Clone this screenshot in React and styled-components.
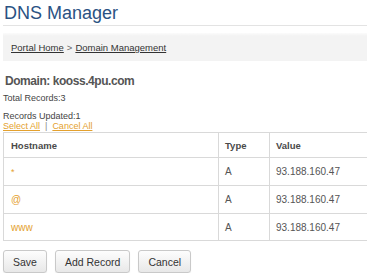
import React from 'react';
import styled, { createGlobalStyle } from 'styled-components';

const GlobalStyle = createGlobalStyle`
    html, body {
        margin: 0;
        padding: 0;
        background: #ffffff;
        overflow: hidden;
    }
    body {
        font-family: "Liberation Sans", Arial, sans-serif;
        color: #333333;
    }
`

const Page = styled.div`
    width: 400px;
    padding: 0 0 0 3px;
    box-sizing: border-box;
`
const Title = styled.h1`
    margin: 0;
    padding: 3px 0 0 1px;
    height: 22px;
    font-size: 18px;
    font-weight: normal;
    color: #2a5283;
    line-height: 20px;
    border-bottom: 1px solid #e3e3e3;
`
const Breadcrumb = styled.div`
    margin-top: 7px;
    height: 28px;
    display: flex;
    align-items: center;
    padding: 1px 0 0 8px;
    box-sizing: border-box;
    background: linear-gradient(#fbfbfb 0px, #f3f3f3 3px, #f3f3f3 100%);
    font-size: 9.5px;
    color: #333333;
`
const CrumbLink = styled.a`
    color: #333333;
    text-decoration: underline;
`
const Sep = styled.span`
    color: #666666;
    margin: 0 3px;
`
const Domain = styled.h2`
    margin: 13px 0 0 2px;
    font-size: 12px;
    letter-spacing: -0.45px;
    font-weight: bold;
    color: #555555;
    line-height: 14px;
`
const Info = styled.div`
    font-size: 9px;
    color: #444444;
    line-height: 10px;
    margin-top: ${p => p.$top}px;
`
const Links = styled.div`
    font-size: 9px;
    line-height: 10px;
    color: #888888;
    display: flex;
    gap: 5px;
`
const OrangeLink = styled.a`
    color: #e4a12e;
    text-decoration: underline;
`
const Table = styled.table`
    margin-top: 1px;
    width: 100%;
    table-layout: fixed;
    border-collapse: collapse;
    border-left: 1px solid #d9d9d9;
`
const Th = styled.th`
    text-align: left;
    font-size: 9.5px;
    font-weight: bold;
    color: #4a4a4a;
    height: 24px;
    padding: 0 0 0 ${p => p.$pad}px;
    border-top: 1px solid #d9d9d9;
    border-bottom: 1px solid #d9d9d9;
    border-left: 1px solid #d9d9d9;
    &:first-child { border-left: none; }
`
const Td = styled.td`
    font-size: ${p => p.$size || 10}px;
    color: ${p => p.$orange ? '#e4a12e' : '#555555'};
    height: ${p => p.$h}px;
    padding: 0 0 0 ${p => p.$pad}px;
    border-bottom: 1px solid #d9d9d9;
    border-left: 1px solid #d9d9d9;
    &:first-child { border-left: none; }
`
const Buttons = styled.div`
    display: flex;
    gap: 8px;
    margin-top: 9px;
`
const Button = styled.button`
    height: 23px;
    padding: 0 9px;
    font-family: "Liberation Sans", Arial, sans-serif;
    font-size: 10.5px;
    color: #333333;
    background: linear-gradient(#fdfdfd, #e8e8e8);
    border: 1px solid #c9c9c9;
    border-radius: 3px;
    box-shadow: 0 1px 1px rgba(0, 0, 0, 0.08);
`

const records = [
    { host: '*', type: 'A', value: '93.188.160.47', h: 27 },
    { host: '@', type: 'A', value: '93.188.160.47', h: 27 },
    { host: 'www', type: 'A', value: '93.188.160.47', h: 26 },
]

export default function App() {
    return (
        <Page>
            <GlobalStyle />
            <Title>DNS Manager</Title>
            <Breadcrumb>
                <CrumbLink>Portal Home</CrumbLink>
                <Sep>&gt;</Sep>
                <CrumbLink>Domain Management</CrumbLink>
            </Breadcrumb>
            <Domain>Domain: kooss.4pu.com</Domain>
            <Info $top={5}>Total Records:3</Info>
            <Info $top={8}>Records Updated:1</Info>
            <Links>
                <OrangeLink>Select All</OrangeLink>
                <span>|</span>
                <OrangeLink>Cancel All</OrangeLink>
            </Links>
            <Table>
                <colgroup>
                    <col style={{ width: 215 }} />
                    <col style={{ width: 51 }} />
                    <col />
                </colgroup>
                <thead>
                    <tr>
                        <Th $pad={7}>Hostname</Th>
                        <Th $pad={6}>Type</Th>
                        <Th $pad={6}>Value</Th>
                    </tr>
                </thead>
                <tbody>
                    {records.map((r, i) => (
                        <tr key={i}>
                            <Td $h={r.h} $pad={7} $orange $size={r.host === '*' ? 9 : 10}>{r.host}</Td>
                            <Td $h={r.h} $pad={6}>{r.type}</Td>
                            <Td $h={r.h} $pad={6}>{r.value}</Td>
                        </tr>
                    ))}
                </tbody>
            </Table>
            <Buttons>
                <Button>Save</Button>
                <Button>Add Record</Button>
                <Button>Cancel</Button>
            </Buttons>
        </Page>
    )
}
